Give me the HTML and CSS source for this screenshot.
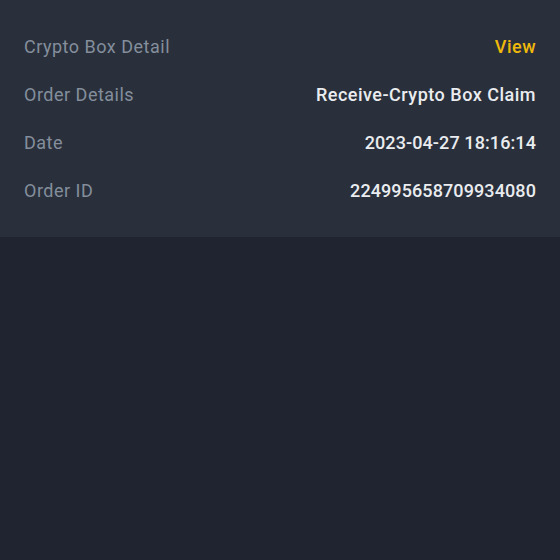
FILE: index.html
```html
<!DOCTYPE html>
<html lang="en">
<head>
  <meta charset="UTF-8">
  <title>Crypto Box Order</title>
  <meta name="viewport" content="width=device-width, initial-scale=1.0">
  <link rel="stylesheet" href="styles.css">
</head>
<body>
  <div class="detail-card">
    <div class="detail-row">
      <span class="label">Crypto Box Detail</span>
      <a class="value link" href="#">View</a>
    </div>
    <div class="detail-row">
      <span class="label">Order Details</span>
      <span class="value">Receive-Crypto Box Claim</span>
    </div>
    <div class="detail-row">
      <span class="label">Date</span>
      <span class="value num">2023-04-27 18:16:14</span>
    </div>
    <div class="detail-row">
      <span class="label">Order ID</span>
      <span class="value num">224995658709934080</span>
    </div>
  </div>
</body>
</html>
```

FILE: styles.css
```css
:root {
  --page-bg: #1f2430;
  --card-bg: #29303b;
  --label-color: #848e9c;
  --value-color: #eaecef;
  --accent-color: #f0b90b;
}

html, body {
  height: 100%;
}

body {
  margin: 0;
  background-color: var(--page-bg);
  font-family: 'Roboto', sans-serif;
}

.detail-card {
  background-color: var(--card-bg);
  padding: 22px 24px 23px;
  display: flex;
  flex-direction: column;
}

.detail-row {
  height: 48px;
  display: flex;
  align-items: center;
  justify-content: space-between;
  font-size: 18px;
  letter-spacing: 0.5px;
}

.label {
  color: var(--label-color);
}

.value {
  color: var(--value-color);
  font-weight: 500;
}

.value.num {
  letter-spacing: 0.1px;
}

.link {
  color: var(--accent-color);
  text-decoration: none;
}
```
